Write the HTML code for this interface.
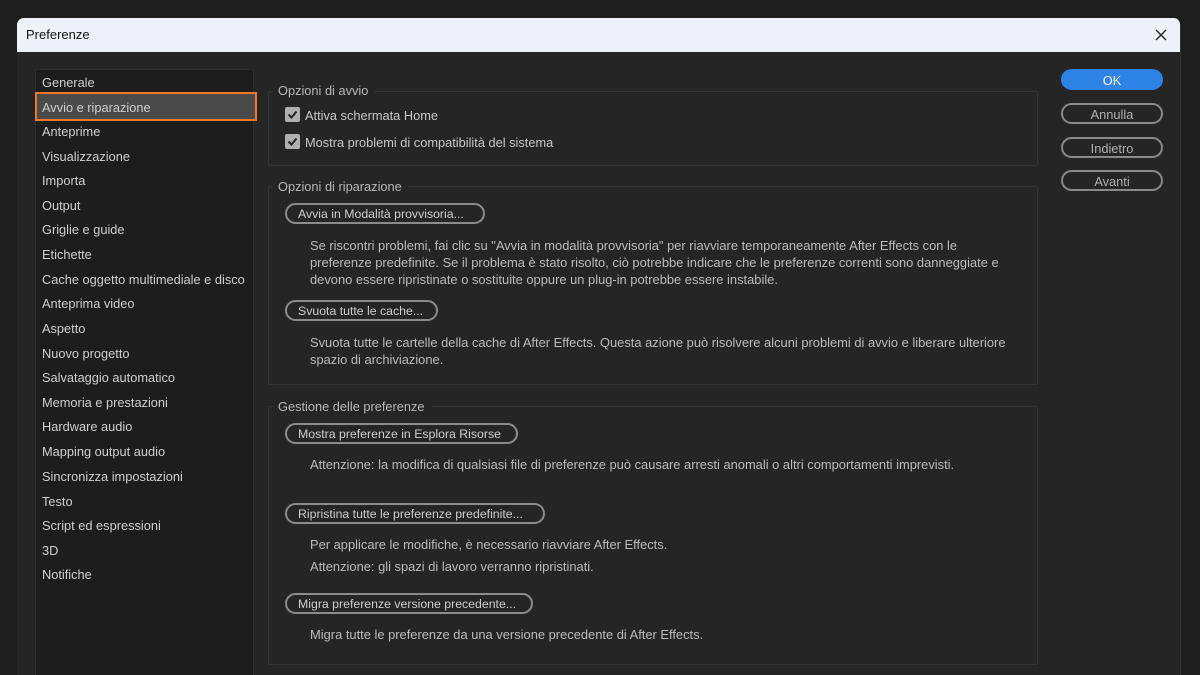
<!DOCTYPE html>
<html><head><meta charset="utf-8"><style>
*{margin:0;padding:0;box-sizing:border-box}
html,body{overflow:hidden}
body{width:1200px;height:675px;background:#1e1e1e;position:relative;overflow:hidden;font-family:"Liberation Sans",sans-serif;font-size:12.8px;color:#c8c8c8}
.abs{position:absolute;white-space:nowrap}
#dlg{position:absolute;left:17px;top:18px;width:1164px;height:657px;background:#252525;border-radius:7px 7px 0 0;overflow:hidden;border-right:1px solid #333}
#title{position:absolute;left:0;top:0;width:100%;height:34px;background:#eef2f8;color:#111;font-size:13px;padding:9px 0 0 9px}
#list{position:absolute;left:35px;top:69px;width:219px;height:620px;background:#1d1d1d;border:1px solid #2e2e2e}
.li{position:absolute;left:42px;color:#cfcfcf;font-size:12.8px}
.box{position:absolute;border:1px solid #333;border-radius:2px}
.lg{position:absolute;background:#252525;padding:0 6px 0 5px;color:#b8b8b8}
.btn{position:absolute;height:21px;border:2px solid #8c8c8c;border-radius:11px;color:#cfcfcf;padding:2px 0 0 11px;white-space:nowrap;font-size:12.3px}
.rb{position:absolute;left:1061px;width:102px;height:21px;border:2px solid #8a8a8a;border-radius:11px;color:#b0b0b0;text-align:center;padding-top:2px}
.cb{position:absolute;width:15px;height:15px;background:#b0b0b0;border-radius:2px}
.d{color:#bcbcbc;font-size:12.9px}
</style></head><body>
<div id="dlg"><div id="title">Preferenze</div>
<svg style="position:absolute;left:1138px;top:11px" width="12" height="12"><path d="M1 1L11 11M11 1L1 11" stroke="#222" stroke-width="1.4"/></svg>
</div>
<div id="list"></div>
<div class="abs" style="left:35px;top:92px;width:222px;height:29px;background:#4a4a4a;border:2px solid #f0782a"></div>
<div class="li abs" style="top:75px">Generale</div>
<div class="li abs" style="top:100px">Avvio e riparazione</div>
<div class="li abs" style="top:124px">Anteprime</div>
<div class="li abs" style="top:149px">Visualizzazione</div>
<div class="li abs" style="top:173px">Importa</div>
<div class="li abs" style="top:198px">Output</div>
<div class="li abs" style="top:222px">Griglie e guide</div>
<div class="li abs" style="top:247px">Etichette</div>
<div class="li abs" style="top:272px">Cache oggetto multimediale e disco</div>
<div class="li abs" style="top:296px">Anteprima video</div>
<div class="li abs" style="top:321px">Aspetto</div>
<div class="li abs" style="top:346px">Nuovo progetto</div>
<div class="li abs" style="top:370px">Salvataggio automatico</div>
<div class="li abs" style="top:395px">Memoria e prestazioni</div>
<div class="li abs" style="top:419px">Hardware audio</div>
<div class="li abs" style="top:444px">Mapping output audio</div>
<div class="li abs" style="top:469px">Sincronizza impostazioni</div>
<div class="li abs" style="top:494px">Testo</div>
<div class="li abs" style="top:518px">Script ed espressioni</div>
<div class="li abs" style="top:543px">3D</div>
<div class="li abs" style="top:567px">Notifiche</div>

<div class="box" style="left:268px;top:91px;width:770px;height:75px"></div>
<div class="lg abs" style="left:273px;top:83px">Opzioni di avvio</div>
<div class="cb" style="left:285px;top:107px"></div><svg class="abs" style="left:285px;top:107px" width="15" height="15"><path d="M3.5 7.5L6.5 10.5L11.5 4.5" stroke="#222" stroke-width="2" fill="none"/></svg>
<div class="abs" style="left:305px;top:108px">Attiva schermata Home</div>
<div class="cb" style="left:285px;top:134px"></div><svg class="abs" style="left:285px;top:134px" width="15" height="15"><path d="M3.5 7.5L6.5 10.5L11.5 4.5" stroke="#222" stroke-width="2" fill="none"/></svg>
<div class="abs" style="left:305px;top:135px">Mostra problemi di compatibilità del sistema</div>

<div class="box" style="left:268px;top:186px;width:770px;height:199px"></div>
<div class="lg abs" style="left:273px;top:179px">Opzioni di riparazione</div>
<div class="btn" style="left:285px;top:203px;width:200px">Avvia in Modalità provvisoria...</div>
<div class="abs d" style="left:310px;top:237px;line-height:17px">Se riscontri problemi, fai clic su "Avvia in modalità provvisoria" per riavviare temporaneamente After Effects con le<br>preferenze predefinite. Se il problema è stato risolto, ciò potrebbe indicare che le preferenze correnti sono danneggiate e<br>devono essere ripristinate o sostituite oppure un plug-in potrebbe essere instabile.</div>
<div class="btn" style="left:285px;top:300px;width:153px">Svuota tutte le cache...</div>
<div class="abs d" style="left:310px;top:334px;line-height:17px">Svuota tutte le cartelle della cache di After Effects. Questa azione può risolvere alcuni problemi di avvio e liberare ulteriore<br>spazio di archiviazione.</div>

<div class="box" style="left:268px;top:406px;width:770px;height:259px"></div>
<div class="lg abs" style="left:273px;top:399px">Gestione delle preferenze</div>
<div class="btn" style="left:285px;top:423px;width:233px">Mostra preferenze in Esplora Risorse</div>
<div class="abs d" style="left:310px;top:457px">Attenzione: la modifica di qualsiasi file di preferenze può causare arresti anomali o altri comportamenti imprevisti.</div>
<div class="btn" style="left:285px;top:503px;width:260px">Ripristina tutte le preferenze predefinite...</div>
<div class="abs d" style="left:310px;top:537px">Per applicare le modifiche, è necessario riavviare After Effects.</div>
<div class="abs d" style="left:310px;top:559px">Attenzione: gli spazi di lavoro verranno ripristinati.</div>
<div class="btn" style="left:285px;top:593px;width:248px">Migra preferenze versione precedente...</div>
<div class="abs d" style="left:310px;top:627px">Migra tutte le preferenze da una versione precedente di After Effects.</div>

<div class="rb" style="top:69px;background:#2d83e6;border-color:#2d83e6;color:#fff">OK</div>
<div class="rb" style="top:103px">Annulla</div>
<div class="rb" style="top:137px">Indietro</div>
<div class="rb" style="top:170px">Avanti</div>
</body></html>
